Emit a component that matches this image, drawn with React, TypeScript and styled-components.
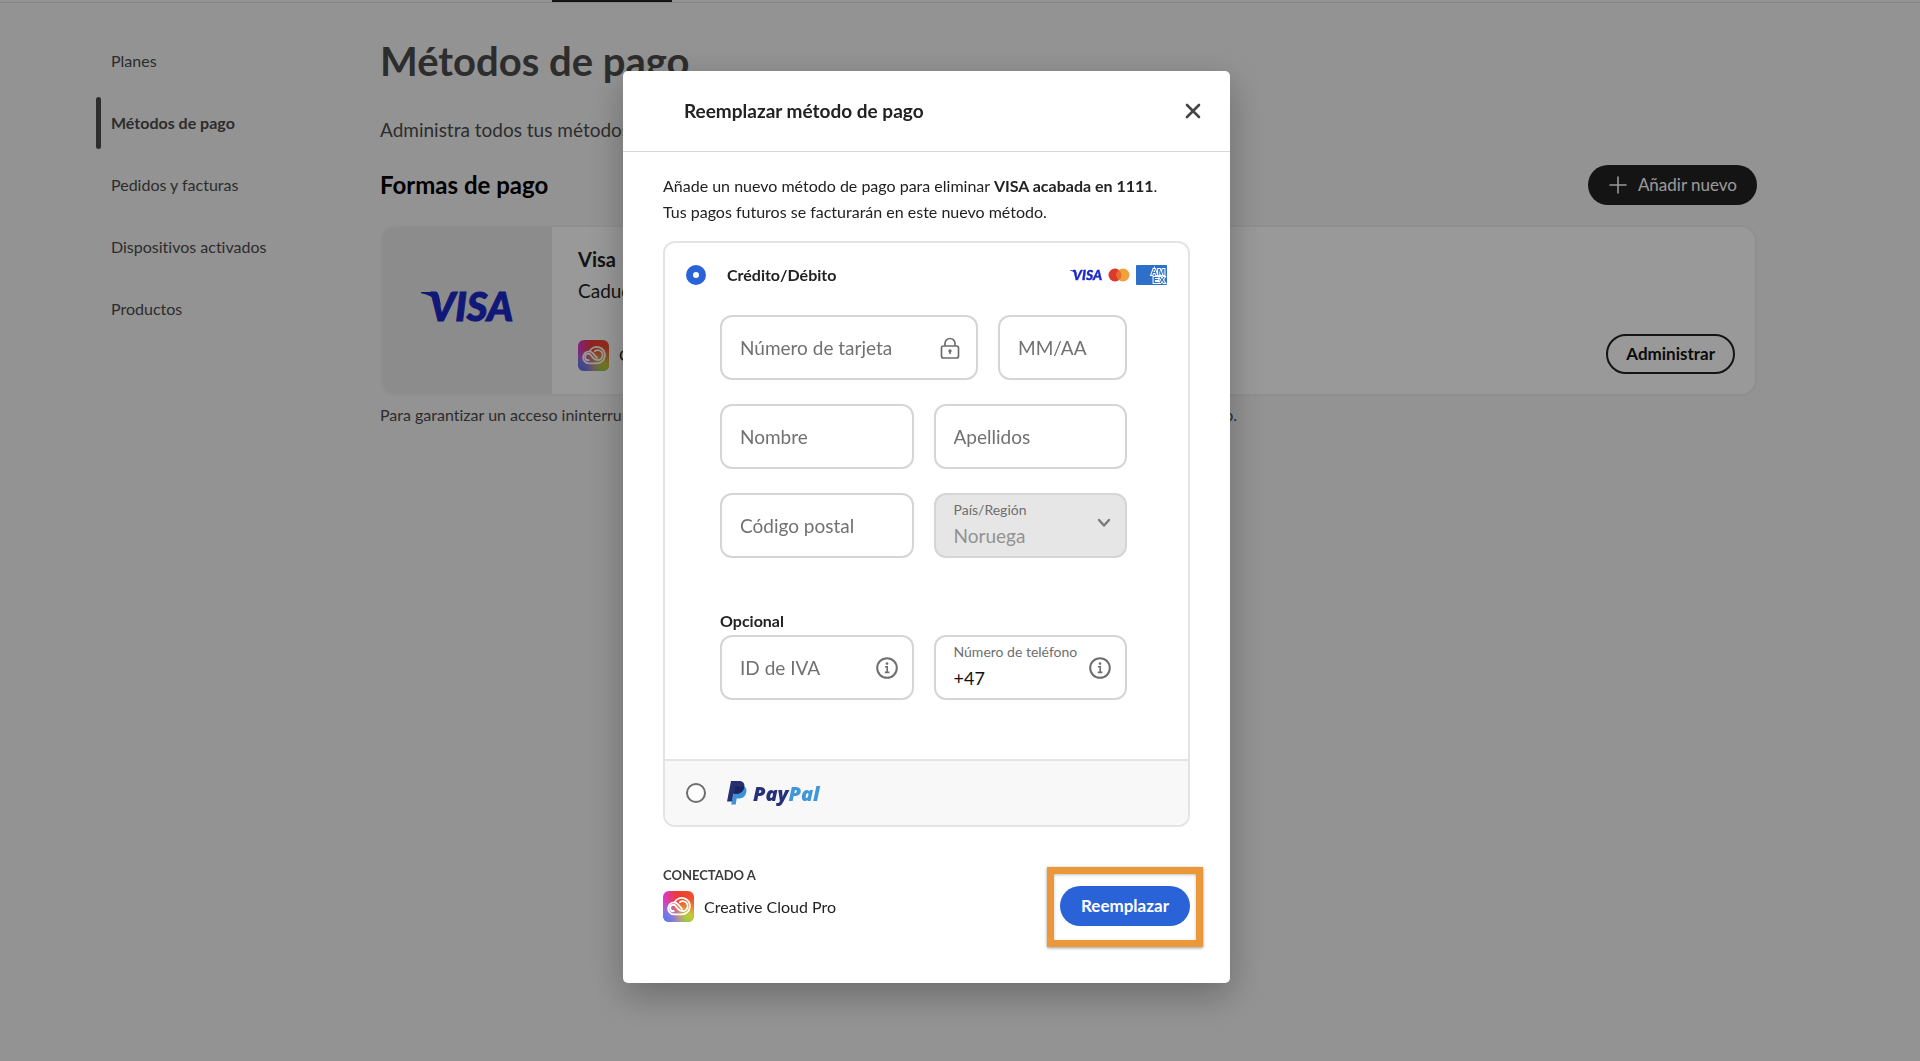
import React from 'react';
import styled, { createGlobalStyle } from 'styled-components';

const GlobalStyle = createGlobalStyle`
  *, *::before, *::after { box-sizing: border-box; }
  body {
    margin: 0;
    background: #f5f5f5;
    color: #222;
    font-family: Lato, "Noto Sans", sans-serif;
    font-size: 16px;
    line-height: 24px;
    font-variant-ligatures: none;
  }
  button, input, select { font: inherit; color: inherit; }
  h1, h2, h3, p { margin: 0; }
`;

/* ---------- account page ---------- */

const TopBar = styled.header`
  display: flex;
  height: 3px;
  padding-left: 552px;
  border-bottom: 1px solid #dedede;
`;

const ActiveTab = styled.span`
  width: 120px;
  background: #222;
`;

const Layout = styled.div`
  display: grid;
  grid-template-columns: 284px 1fr;
  padding: 32px 163px 32px 96px;
`;

const SideNav = styled.nav`
  display: flex;
  flex-direction: column;
  align-items: flex-start;
  gap: 10px;
`;

const NavLink = styled.a<{ $active?: boolean }>`
  display: flex;
  align-items: center;
  gap: 10px;
  height: 52px;
  color: #4b4b4b;
  font-weight: ${(p) => (p.$active ? 700 : 400)};
  text-decoration: none;

  &::before {
    content: '';
    width: 5px;
    height: 52px;
    border-radius: 3px;
    background: ${(p) => (p.$active ? '#4b4b4b' : 'transparent')};
  }
`;

const PageTitle = styled.h1`
  color: #4b4b4b;
  font-size: 40px;
  line-height: 52px;
`;

const Lead = styled.p`
  margin-top: 29px;
  color: #4b4b4b;
  font-size: 19px;
  line-height: 28px;
`;

const SectionHead = styled.div`
  display: flex;
  align-items: center;
  justify-content: space-between;
  margin: 21px 0 20px;
`;

const SectionTitle = styled.h2`
  color: #000;
  font-size: 24px;
  line-height: 32px;
`;

const Pill = styled.button<{ $kind: 'dark' | 'outline' | 'accent' }>`
  display: flex;
  align-items: center;
  gap: 10px;
  height: 40px;
  padding: 0 ${(p) => ({ dark: 20, outline: 18, accent: 21 })[p.$kind]}px;
  border: ${(p) => (p.$kind === 'outline' ? '2px solid #222' : '0')};
  border-radius: 20px;
  background: ${(p) => ({ dark: '#222', outline: 'transparent', accent: '#2a63d8' })[p.$kind]};
  color: ${(p) => (p.$kind === 'outline' ? '#111' : '#fff')};
  font-size: 17px;
  font-weight: ${(p) => (p.$kind === 'dark' ? 400 : 700)};
`;

const MethodCard = styled.article`
  display: grid;
  grid-template-columns: 170px 1fr auto;
  height: 171px;
  border: 2px solid #efefef;
  border-radius: 16px;
  background: #fff;
  overflow: hidden;
`;

const BrandPane = styled.div`
  display: flex;
  align-items: center;
  justify-content: center;
  padding-bottom: 8px;
  background: #e9e9e9;
`;

const MethodInfo = styled.div`
  display: flex;
  flex-direction: column;
  padding: 18px 0 22px 26px;
  font-size: 19px;
`;

const MethodName = styled.h3`
  font-size: 20px;
  line-height: 28px;
`;

const Expiry = styled.p`
  margin-top: 6px;
`;

const MethodProduct = styled.div`
  display: flex;
  align-items: center;
  gap: 10px;
  margin-top: auto;
  height: 34px;
  font-size: 16px;
`;

const MethodActions = styled.div`
  display: flex;
  align-items: flex-end;
  padding: 0 20px 20px 0;
`;

const Note = styled.p`
  margin-top: 7px;
  color: #4b4b4b;
`;

/* ---------- dialog ---------- */

const Overlay = styled.div`
  position: fixed;
  inset: 0;
  display: flex;
  align-items: center;
  justify-content: center;
  padding: 0 67px 7px 0;
  background: rgba(0, 0, 0, 0.4);
`;

const Dialog = styled.section`
  width: 607px;
  border-radius: 5px;
  background: #fff;
  box-shadow: 0 12px 36px rgba(0, 0, 0, 0.28);
`;

const DialogHead = styled.header`
  display: flex;
  align-items: center;
  justify-content: space-between;
  height: 81px;
  padding: 0 20px 0 61px;
  border-bottom: 1px solid #d8d8d8;
`;

const DialogTitle = styled.h2`
  font-size: 19px;
  line-height: 28px;
`;

const CloseButton = styled.button`
  display: flex;
  align-items: center;
  justify-content: center;
  width: 34px;
  height: 34px;
  padding: 0;
  border: 0;
  background: none;
  color: #464646;
`;

const DialogBody = styled.div`
  padding: 21px 40px 57px;
`;

const Intro = styled.p`
  line-height: 26px;
`;

const Options = styled.fieldset`
  min-width: 0;
  margin: 16px 0 0;
  padding: 0;
  border: 2px solid #e4e4e4;
  border-radius: 12px;
  overflow: hidden;
`;

const OptionRow = styled.div<{ $muted?: boolean }>`
  display: flex;
  align-items: center;
  gap: 21px;
  height: ${(p) => (p.$muted ? 66 : 64)}px;
  padding: 0 21px;
  background: ${(p) => (p.$muted ? '#f8f8f8' : '#fff')};
  border-top: ${(p) => (p.$muted ? '2px solid #e4e4e4' : '0')};
`;

const Radio = styled.input`
  appearance: none;
  width: 20px;
  height: 20px;
  margin: 0;
  border: 2px solid #6e6e6e;
  border-radius: 50%;
  background: #fff;

  &:checked {
    border: 7px solid #2a63d8;
  }
`;

const OptionLabel = styled.label`
  display: flex;
  align-items: center;
  font-weight: 700;
`;

const Brands = styled.div`
  display: flex;
  align-items: center;
  gap: 6px;
  margin-left: auto;
`;

const CardForm = styled.div`
  display: flex;
  flex-direction: column;
  gap: 24px;
  padding: 8px 61px 59px 55px;
`;

const FieldRow = styled.div<{ $columns?: string }>`
  display: grid;
  grid-template-columns: ${(p) => p.$columns ?? '1fr 1fr'};
  gap: 20px;
`;

const OptionalGroup = styled.section`
  margin-top: 25px;
`;

const OptionalTitle = styled.h3`
  font-size: 16px;
  line-height: 28px;
`;

const FieldBox = styled.div<{ $disabled?: boolean }>`
  display: flex;
  align-items: center;
  gap: 8px;
  height: 65px;
  padding: 0 14px 0 18px;
  border: 2px solid #d5d5d5;
  border-radius: 12px;
  background: ${(p) => (p.$disabled ? '#e6e6e6' : '#fff')};
  color: #6e6e6e;

  svg { flex: none; }
`;

const FieldText = styled.div`
  display: flex;
  flex: 1;
  flex-direction: column;
  min-width: 0;
`;

const FloatingLabel = styled.label`
  font-size: 14px;
  line-height: 20px;
  white-space: nowrap;
`;

const Input = styled.input`
  width: 100%;
  height: 32px;
  padding: 0;
  border: 0;
  outline: 0;
  background: none;
  color: #111;
  font-size: 18px;

  &::placeholder {
    color: #717171;
    opacity: 1;
    font-size: 19px;
  }
`;

const Select = styled.select`
  appearance: none;
  width: 100%;
  height: 32px;
  padding: 0;
  border: 0;
  background: none;
  color: #929292;
  font-size: 19px;
  opacity: 1;
`;

const DialogFoot = styled.footer`
  display: flex;
  align-items: flex-start;
  justify-content: space-between;
  margin-top: 38px;
`;

const LinkedTitle = styled.h3`
  color: #3d3d3d;
  font-size: 13px;
  line-height: 20px;
`;

const LinkedProduct = styled.div`
  display: flex;
  align-items: center;
  gap: 10px;
  margin-top: 6px;
`;

const Highlight = styled.div`
  position: relative;
  margin-top: 21px;

  &::after {
    content: '';
    position: absolute;
    inset: -19px -13px -21px;
    border: 7px solid #eb983b;
    box-shadow: 0 1px 3px rgba(0, 0, 0, 0.4), inset 0 1px 3px rgba(0, 0, 0, 0.25);
    pointer-events: none;
  }
`;

/* ---------- drawings ---------- */

const VisaLogo = ({ width }: { width: number }) => (
  <svg width={width} height={(width * 31) / 92} viewBox="0 0 92 31" role="img" aria-label="Visa" overflow="visible">
    <path d="M0 1h12c3 0 5 1 6 4l2 10C16 8 9 4 0 2.200z" fill="#1c28c8" />
    <text x="8" y="30" fill="#1c28c8" stroke="#1c28c8" strokeWidth="1" fontFamily="Lato, sans-serif" fontWeight="900" fontStyle="italic" fontSize="40">
      VISA
    </text>
  </svg>
);

const MastercardLogo = () => (
  <svg width="22" height="14" viewBox="0 0 22 14" role="img" aria-label="Mastercard">
    <circle cx="7" cy="7" r="6.500" fill="#dc3b2b" />
    <circle cx="15" cy="7" r="6.500" fill="#f0a13c" />
    <path d="M11 1.900a6.500 6.500 0 0 1 0 10.200a6.500 6.500 0 0 1 0-10.200z" fill="#ea6b2d" />
  </svg>
);

const AmexLogo = () => (
  <svg width="31" height="20" viewBox="0 0 31 20" role="img" aria-label="American Express">
    <rect width="31" height="20" rx="1" fill="#2d6fc9" />
    <g fill="#2d6fc9" stroke="#fff" strokeWidth="2" paintOrder="stroke" fontFamily="'Liberation Sans', sans-serif" fontWeight="700" fontSize="9">
      <text x="15" y="10">AM</text>
      <text x="17" y="18">EX</text>
    </g>
  </svg>
);

const CreativeCloudIcon = ({ id }: { id: string }) => (
  <svg width="31" height="31" viewBox="0 0 31 31" aria-hidden="true">
    <defs>
      <linearGradient id={`${id}-base`} x1="0" y1="0" x2="1" y2="0">
        <stop offset="0" stopColor="#d63bd0" />
        <stop offset="0.450" stopColor="#ee3b35" />
        <stop offset="1" stopColor="#f0502a" />
      </linearGradient>
      <radialGradient id={`${id}-blue`} cx="0" cy="1" r="0.750">
        <stop offset="0" stopColor="#3f7df2" />
        <stop offset="0.450" stopColor="#7c79ec" stopOpacity="0.900" />
        <stop offset="1" stopColor="#c75bd8" stopOpacity="0" />
      </radialGradient>
      <radialGradient id={`${id}-green`} cx="0.750" cy="1.050" r="0.850">
        <stop offset="0" stopColor="#7fd645" />
        <stop offset="0.400" stopColor="#c9cf3c" stopOpacity="0.900" />
        <stop offset="1" stopColor="#f2a02c" stopOpacity="0" />
      </radialGradient>
    </defs>
    <rect width="31" height="31" rx="6" fill={`url(#${id}-base)`} />
    <rect width="31" height="31" rx="6" fill={`url(#${id}-green)`} />
    <rect width="31" height="31" rx="6" fill={`url(#${id}-blue)`} />
    <g fill="none" stroke="#fff" strokeWidth="1.800" strokeLinecap="round">
      <path d="M10.800 23.300h8a8.200 8.200 0 1 0-7.300-12A6 6 0 1 0 10.800 23.300z" />
      <path d="M11.500 11.300c1.500.2 2.400.8 3.300 1.800l4.200 4.800" />
      <path d="M16.800 11.200a4.900 4.900 0 1 1 2 8.700c-1.600 0-2.500-.6-3.500-1.700l-2-2.300a3.200 3.200 0 1 0-2.500 4.300" />
    </g>
  </svg>
);

const PayPalLogo = () => (
  <svg width="96" height="26" viewBox="0 0 96 26" role="img" aria-label="PayPal">
    <path d="M8 6h7c3.500 0 5 2.500 4.300 6-.8 4.500-3.800 6.500-7.800 6.500h-1.800L8.700 24.500H4.200z" fill="#3b92d6" />
    <path d="M4 1h8c4 0 6 2.500 5.300 6-.9 4.700-4 6.800-8.300 6.800H6.300L5 21.500H0z" fill="#253070" />
    <path d="M8.400 6.500h8.900c-.6 4.900-4 7.300-8.300 7.300H7.200z" fill="#20235f" />
    <g fontFamily="'Open Sans', 'Noto Sans', sans-serif" fontWeight="800" fontStyle="italic" fontSize="20">
      <text x="26" y="21" fill="#27317a">
        Pay<tspan fill="#3f97d8">Pal</tspan>
      </text>
    </g>
  </svg>
);

const CloseIcon = () => (
  <svg width="16" height="16" viewBox="0 0 16 16" stroke="currentColor" strokeWidth="2.600" strokeLinecap="round" aria-hidden="true">
    <path d="M2 2l12 12M14 2L2 14" />
  </svg>
);

const PlusIcon = () => (
  <svg width="20" height="20" viewBox="0 0 20 20" stroke="currentColor" strokeWidth="1.600" strokeLinecap="round" aria-hidden="true">
    <path d="M10 2v16M2 10h16" />
  </svg>
);

const LockIcon = () => (
  <svg width="22" height="22" viewBox="0 0 22 22" fill="none" stroke="currentColor" strokeWidth="1.700" aria-hidden="true">
    <rect x="1.500" y="9" width="17" height="12" rx="2" />
    <path d="M5 9V6.500a5 5 0 0 1 10 0V9" />
    <path d="M10 14v3" strokeWidth="1.500" />
    <circle cx="10" cy="14" r="0.800" fill="currentColor" />
  </svg>
);

const InfoIcon = () => (
  <svg width="22" height="22" viewBox="0 0 22 22" fill="none" stroke="currentColor" strokeWidth="2" aria-hidden="true">
    <circle cx="11" cy="11" r="9.800" />
    <path d="M9 9.800h2.200v5.400M8.800 15.400h4.600" strokeWidth="1.600" />
    <circle cx="11" cy="6.600" r="1.300" fill="currentColor" stroke="none" />
  </svg>
);

const ChevronIcon = () => (
  <svg width="14" height="18" viewBox="0 0 14 18" fill="none" stroke="#7a7a7a" strokeWidth="2.400" strokeLinecap="round" strokeLinejoin="round" aria-hidden="true">
    <path d="M2 3l5 5.500L12 3" />
  </svg>
);

/* ---------- parts ---------- */

type FieldProps = { name: string; label: string; value?: string; icon?: React.ReactNode };

const Field = ({ name, label, value, icon }: FieldProps) => (
  <FieldBox>
    <FieldText>
      {value && <FloatingLabel htmlFor={name}>{label}</FloatingLabel>}
      <Input id={name} name={name} aria-label={label} placeholder={value ? undefined : label} defaultValue={value} />
    </FieldText>
    {icon}
  </FieldBox>
);

const sections = ['Planes', 'Métodos de pago', 'Pedidos y facturas', 'Dispositivos activados', 'Productos'];

export default function App() {
  return (
    <>
      <GlobalStyle />
      <TopBar>
        <ActiveTab />
      </TopBar>
      <Layout>
        <SideNav>
          {sections.map((s) => (
            <NavLink key={s} href="#" $active={s === 'Métodos de pago'}>
              {s}
            </NavLink>
          ))}
        </SideNav>
        <main>
          <PageTitle>Métodos de pago</PageTitle>
          <Lead>Administra todos tus métodos de pago.</Lead>
          <SectionHead>
            <SectionTitle>Formas de pago</SectionTitle>
            <Pill type="button" $kind="dark">
              <PlusIcon />
              Añadir nuevo
            </Pill>
          </SectionHead>
          <MethodCard>
            <BrandPane>
              <VisaLogo width={92} />
            </BrandPane>
            <MethodInfo>
              <MethodName>Visa</MethodName>
              <Expiry>Caduca</Expiry>
              <MethodProduct>
                <CreativeCloudIcon id="cc-card" />
                Creative Cloud Pro
              </MethodProduct>
            </MethodInfo>
            <MethodActions>
              <Pill type="button" $kind="outline">
                Administrar
              </Pill>
            </MethodActions>
          </MethodCard>
          <Note>
            Para garantizar un acceso ininterrumpido, es probable que se cobre el importe en otro método de pago si fallara el primero.
          </Note>
        </main>
      </Layout>

      <Overlay>
        <Dialog role="dialog" aria-modal="true" aria-labelledby="dialog-title">
          <DialogHead>
            <DialogTitle id="dialog-title">Reemplazar método de pago</DialogTitle>
            <CloseButton type="button" aria-label="Cerrar">
              <CloseIcon />
            </CloseButton>
          </DialogHead>
          <DialogBody>
            <Intro>
              Añade un nuevo método de pago para eliminar <b>VISA acabada en 1111</b>.
              <br />
              Tus pagos futuros se facturarán en este nuevo método.
            </Intro>
            <Options aria-label="Método de pago">
              <OptionRow>
                <Radio type="radio" name="method" id="method-card" defaultChecked />
                <OptionLabel htmlFor="method-card">Crédito/Débito</OptionLabel>
                <Brands>
                  <VisaLogo width={32} />
                  <MastercardLogo />
                  <AmexLogo />
                </Brands>
              </OptionRow>
              <CardForm>
                <FieldRow $columns="2fr 1fr">
                  <Field name="number" label="Número de tarjeta" icon={<LockIcon />} />
                  <Field name="expiry" label="MM/AA" />
                </FieldRow>
                <FieldRow>
                  <Field name="first-name" label="Nombre" />
                  <Field name="last-name" label="Apellidos" />
                </FieldRow>
                <FieldRow>
                  <Field name="postcode" label="Código postal" />
                  <FieldBox $disabled>
                    <FieldText>
                      <FloatingLabel htmlFor="country">País/Región</FloatingLabel>
                      <Select id="country" disabled>
                        <option>Noruega</option>
                      </Select>
                    </FieldText>
                    <ChevronIcon />
                  </FieldBox>
                </FieldRow>
                <OptionalGroup>
                  <OptionalTitle>Opcional</OptionalTitle>
                  <FieldRow>
                    <Field name="vat" label="ID de IVA" icon={<InfoIcon />} />
                    <Field name="phone" label="Número de teléfono" value="+47" icon={<InfoIcon />} />
                  </FieldRow>
                </OptionalGroup>
              </CardForm>
              <OptionRow $muted>
                <Radio type="radio" name="method" id="method-paypal" />
                <OptionLabel htmlFor="method-paypal">
                  <PayPalLogo />
                </OptionLabel>
              </OptionRow>
            </Options>
            <DialogFoot>
              <div>
                <LinkedTitle>CONECTADO A</LinkedTitle>
                <LinkedProduct>
                  <CreativeCloudIcon id="cc-dialog" />
                  Creative Cloud Pro
                </LinkedProduct>
              </div>
              <Highlight>
                <Pill type="button" $kind="accent">
                  Reemplazar
                </Pill>
              </Highlight>
            </DialogFoot>
          </DialogBody>
        </Dialog>
      </Overlay>
    </>
  );
}
